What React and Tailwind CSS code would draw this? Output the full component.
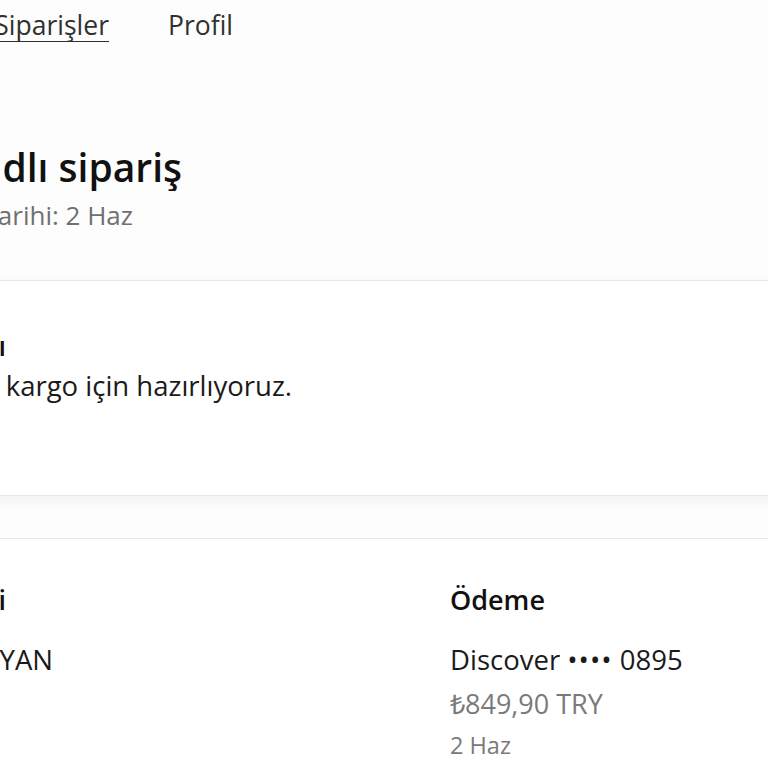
export default function App() {
  // text that runs off the left edge is right-anchored in a clipped box
  const Clip = ({ w, className = '', children }) => (
    <div className={`flex justify-end overflow-hidden whitespace-nowrap shrink-0 ${className}`} style={{ width: w }}>
      <span>{children}</span>
    </div>
  );

  return (
    <div className="h-[768px] w-[768px] overflow-hidden bg-[#fdfdfd] font-['Open_Sans',sans-serif] text-[#1a1a1a]">
      <nav className="flex items-center pt-[6px] text-[26.5px] leading-[38px] text-[#303030]">
        <Clip w={109}>
          <span className="underline decoration-1 underline-offset-[6px]">Siparişler</span>
        </Clip>
        <span className="ml-[59px]">Profil</span>
      </nav>

      <header className="mt-[99px]">
        <Clip w={182} className="text-[39px] leading-[48px] font-semibold text-[#111]">
          #1042 adlı sipariş
        </Clip>
        <Clip w={133} className="mt-[7px] text-[26px] leading-[34px] text-[#707070]">
          Onay tarihi: 2 Haz
        </Clip>
      </header>

      <section className="-mx-[20px] mt-[48px] h-[216px] border-y border-[#e8e8e8] bg-white pl-[20px] shadow-[0_4px_14px_rgba(0,0,0,0.05)]">
        <Clip w={6} className="mt-[46px] text-[27px] leading-[38px] font-semibold text-[#111]">
          Onaylandı
        </Clip>
        <Clip w={292} className="mt-[2px] text-[27.5px] leading-[38px] text-[#1a1a1a]">
          Siparişinizi kargo için hazırlıyoruz.
        </Clip>
      </section>

      <section className="-mx-[20px] mt-[42px] h-[260px] border-t border-[#e8e8e8] bg-white pl-[20px]">
        <div className="flex pt-[42px]">
          <div className="w-[450px]">
            <Clip w={6} className="text-[27px] leading-[38px] font-semibold text-[#111]">
              İletişim bilgileri
            </Clip>
            <Clip w={53} className="mt-[22px] text-[27.5px] leading-[38px]">
              ANNA HAKOBYAN
            </Clip>
          </div>
          <div>
            <h2 className="text-[27px] leading-[38px] font-semibold text-[#111]">Ödeme</h2>
            <p className="mt-[22px] text-[27.5px] leading-[38px]">
              Discover <span className="tracking-[1px]">••••</span> 0895
            </p>
            <p className="mt-[6px] text-[27px] leading-[38px] text-[#7a7a7a]">₺849,90 TRY</p>
            <p className="mt-[6px] text-[23.5px] leading-[32px] text-[#7a7a7a]">2 Haz</p>
          </div>
        </div>
      </section>
    </div>
  );
}
